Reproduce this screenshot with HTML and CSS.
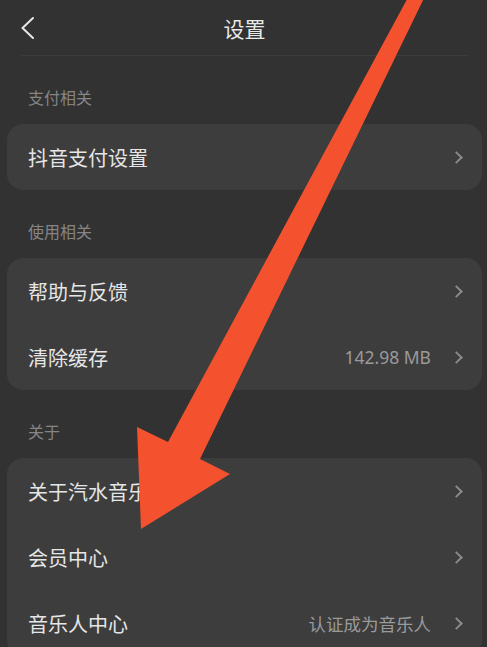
FILE: index.html
```html
<!DOCTYPE html>
<html lang="zh-CN">
<head>
    <meta charset="UTF-8">
    <title>设置</title>
    <link rel="stylesheet" href="styles.css">
</head>
<body>
    <div id="settings-page">
        <div class="topbar">
            <div class="back">
                <svg width="13" height="22" viewBox="0 0 13 22">
                    <polyline points="12,1 1.5,11 12,21" fill="none" stroke="#e6e6e6" stroke-width="2" stroke-linecap="round" stroke-linejoin="round"/>
                </svg>
            </div>
            <div class="title">设置</div>
            <div></div>
        </div>

        <div class="section-title">支付相关</div>
        <div class="card">
            <div class="row">
                <span class="label">抖音支付设置</span>
                <span class="arrow"></span>
            </div>
        </div>

        <div class="section-title">使用相关</div>
        <div class="card">
            <div class="row">
                <span class="label">帮助与反馈</span>
                <span class="arrow"></span>
            </div>
            <div class="row">
                <span class="label">清除缓存</span>
                <span class="value">142.98 MB</span>
                <span class="arrow"></span>
            </div>
        </div>

        <div class="section-title">关于</div>
        <div class="card">
            <div class="row">
                <span class="label">关于汽水音乐</span>
                <span class="arrow"></span>
            </div>
            <div class="row">
                <span class="label">会员中心</span>
                <span class="arrow"></span>
            </div>
            <div class="row">
                <span class="label">音乐人中心</span>
                <span class="value">认证成为音乐人</span>
                <span class="arrow"></span>
            </div>
        </div>
    </div>

    <!-- annotation arrow drawn over the screen -->
    <svg class="pointer" viewBox="0 0 487 647" width="487" height="647">
        <polygon points="412,-10 428,-10 200,459 230,474 141,529 137,427 168,442" fill="#f4522f"/>
    </svg>
</body>
</html>
```

FILE: styles.css
```css
body {
    font-family: "Noto Sans", "Noto Sans CJK SC", sans-serif;
    margin: 0;
    width: 487px;
    height: 647px;
    background-color: #323232;
    color: #e6e6e6;
    overflow: hidden;
    position: relative;
}

#settings-page {
    display: flex;
    flex-direction: column;
}

.topbar {
    margin: 0 19px 0 21px;
    height: 55px;
    border-bottom: 1px solid #3c3c3c;

    display: grid;
    grid-template-columns: 1fr auto 1fr;
    align-items: center;
}

.back {
    display: flex;
    align-items: center;
}

.back svg {
    display: block;
}

.title {
    font-size: 21px;
    color: #e8e8e8;
}

.section-title {
    padding: 32px 0 16px 28px;
    line-height: 20px;
    font-size: 16px;
    color: #858585;
}

.card {
    margin: 0 5px 0 7px;
    background-color: #3d3d3d;
    border-radius: 16px;
}

.row {
    height: 66px;
    padding: 0 21px 0 21px;

    display: flex;
    align-items: center;
}

.label {
    flex: 1;
    font-size: 20px;
    color: #e6e6e6;
}

.value {
    font-size: 17.5px;
    color: #9a9a9a;
    margin-right: 21px;
}

.arrow {
    width: 7px;
    height: 7px;
    border-top: 2px solid #8a8a8a;
    border-right: 2px solid #8a8a8a;
    transform: rotate(45deg);
}

.pointer {
    position: absolute;
    top: 0;
    left: 0;
    pointer-events: none;
}
```
